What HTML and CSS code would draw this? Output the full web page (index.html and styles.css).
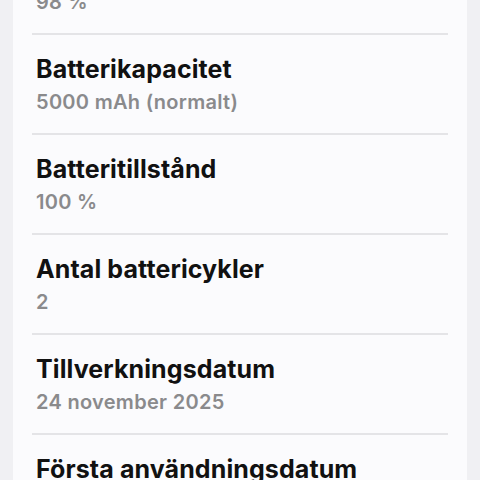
FILE: index.html
```html
<!DOCTYPE html>
<html lang="sv">
<head>
    <meta charset="UTF-8">
    <meta name="viewport" content="width=device-width, initial-scale=1.0">
    <title>Batteriinformation</title>
    <link rel="stylesheet" href="styles.css">
</head>
<body>
    <div class="card">
        <div class="info-row">
            <div class="info-title">Batterinivå</div>
            <div class="info-value">98 %</div>
        </div>
        <div class="info-row">
            <div class="info-title">Batterikapacitet</div>
            <div class="info-value">5000 mAh (normalt)</div>
        </div>
        <div class="info-row">
            <div class="info-title">Batteritillstånd</div>
            <div class="info-value">100 %</div>
        </div>
        <div class="info-row">
            <div class="info-title">Antal battericykler</div>
            <div class="info-value">2</div>
        </div>
        <div class="info-row">
            <div class="info-title">Tillverkningsdatum</div>
            <div class="info-value">24 november 2025</div>
        </div>
        <div class="info-row">
            <div class="info-title">Första användningsdatum</div>
            <div class="info-value">25 november 2025</div>
        </div>
    </div>
</body>
</html>
```
FILE: styles.css
```css
* {
    box-sizing: border-box;
    margin: 0;
    padding: 0;
}

body {
    background: #f0f0f3;
    font-family: 'Inter', 'Roboto', sans-serif;
    color: #111;
    overflow: hidden;
}

.card {
    margin: -65px 13px 0;
    background: #fbfbfd;
    padding: 0 19px;
}

.info-row {
    height: 100px;
    padding-top: 18px;
    border-bottom: 2px solid #e4e4e7;
}

.info-title {
    font-size: 25px;
    line-height: 32px;
    font-weight: 700;
    letter-spacing: 0.1px;
    padding-left: 4px;
}

.info-value {
    font-size: 20px;
    line-height: 28px;
    margin-top: 3px;
    font-weight: 600;
    letter-spacing: 0.3px;
    color: #8a8a8c;
    padding-left: 4px;
}
```
